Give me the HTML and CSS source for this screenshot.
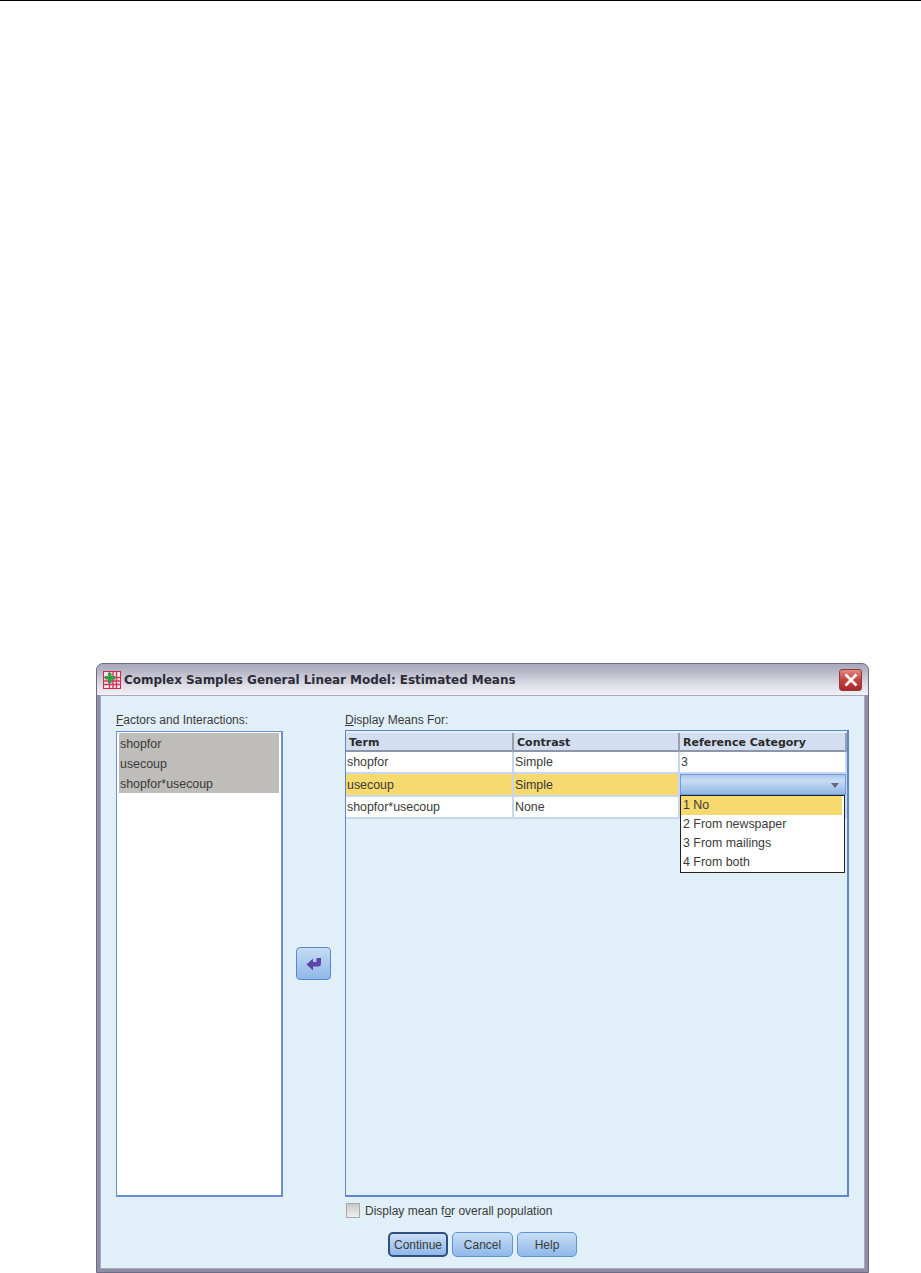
FILE: index.html

```html
<!DOCTYPE html>
<html lang="en">
<head>
    <meta charset="UTF-8">
    <meta name="viewport" content="width=device-width, initial-scale=1.0">
    <title>Estimated Means</title>
    <link rel="stylesheet" href="styles.css">
</head>
<body>
    <div class="page-rule"></div>
    <div class="dialog">
        <div class="titlebar">
            <svg class="app-icon" width="18" height="18" viewBox="0 0 18 18">
                <rect x="0.500" y="0.500" width="17" height="17" fill="#f7e4ea" stroke="#c42a52"/>
                <path d="M1 6.500h16M1 10h16M1 13.500h16M6.500 1v16M10 1v16M13.500 1v16" stroke="#d0385f" stroke-width="1.400"/>
                <path d="M5 2h3.500v3H12v3.500H8.500V12H5V8.500H2V5h3z" fill="#2f9e3f"/>
            </svg>
            <span class="title-text">Complex Samples General Linear Model: Estimated Means</span>
            <div class="close-btn">
                <svg width="16" height="14" viewBox="0 0 16 14">
                    <path d="M2.500 1.500l11 11M13.500 1.500l-11 11" stroke="#fff" stroke-width="2.600"/>
                </svg>
            </div>
        </div>
        <div class="dialog-body">
            <div class="columns">
                <div class="left-col">
                    <div class="field-label"><u>F</u>actors and Interactions:</div>
                    <div class="list-box">
                        <div class="list-item">shopfor</div>
                        <div class="list-item">usecoup</div>
                        <div class="list-item">shopfor*usecoup</div>
                    </div>
                </div>
                <div class="mid-col">
                    <div class="move-btn">
                        <svg width="16" height="14" viewBox="0 0 16 14">
                            <path d="M0.500 7.500L7 1.500V5H10.500V1H15V6.500Q15 9.500 12 9.500H7V13.500z" fill="#5b46a6"/>
                        </svg>
                    </div>
                </div>
                <div class="right-col">
                    <div class="field-label"><u>D</u>isplay Means For:</div>
                    <div class="table-box">
                        <div class="grid-row grid-head">
                            <div class="cell">Term</div>
                            <div class="cell">Contrast</div>
                            <div class="cell">Reference Category</div>
                        </div>
                        <div class="grid-row">
                            <div class="cell">shopfor</div>
                            <div class="cell">Simple</div>
                            <div class="cell">3</div>
                        </div>
                        <div class="grid-row grid-selected">
                            <div class="cell">usecoup</div>
                            <div class="cell">Simple</div>
                            <div class="cell combo-cell">
                                <div class="combo"><span class="combo-arrow"></span></div>
                                <ul class="combo-menu">
                                    <li class="combo-active">1 No</li>
                                    <li>2 From newspaper</li>
                                    <li>3 From mailings</li>
                                    <li>4 From both</li>
                                </ul>
                            </div>
                        </div>
                        <div class="grid-row">
                            <div class="cell">shopfor*usecoup</div>
                            <div class="cell">None</div>
                            <div class="cell"></div>
                        </div>
                    </div>
                    <label class="check-row">
                        <span class="check-box"></span>
                        <span>Display mean f<u>o</u>r overall population</span>
                    </label>
                </div>
            </div>
            <div class="buttons">
                <div class="btn btn-default">Continue</div>
                <div class="btn btn-cancel">Cancel</div>
                <div class="btn">Help</div>
            </div>
        </div>
    </div>
</body>
</html>
```

FILE: styles.css

```css
* {
    margin: 0;
    padding: 0;
    box-sizing: border-box;
}
body {
    background-color: #fff;
    font-family: "Liberation Sans", Arial, sans-serif;
    font-size: 12px;
    color: #3a3a3a;
}
.page-rule {
    height: 1px;
    background-color: #000;
}
.dialog {
    width: 773px;
    height: 610px;
    margin: 662px 0 0 96px;
    background-color: #8f8ea6;
    border: 1px solid #6d6b85;
    border-radius: 7px 7px 0 0;
    padding: 0 3px 3px 3px;
    display: flex;
    flex-direction: column;
}
.titlebar {
    height: 31px;
    margin: 0 -3px;
    padding: 0 6px 0 6px;
    border-radius: 6px 6px 0 0;
    background: linear-gradient(#a9a7ba 0, #b9b8c8 25%, #dcdce4 65%, #f1f1f4 100%);
    display: flex;
    align-items: center;
}
.app-icon {
    margin-right: 3px;
}
.title-text {
    flex: 1;
    font-family: "DejaVu Sans", sans-serif;
    font-size: 12px;
    font-weight: bold;
    color: #2c2c38;
    letter-spacing: -0.04px;
}
.close-btn {
    width: 23px;
    height: 22px;
    border: 1px solid #8c3a3e;
    border-radius: 3px;
    background: linear-gradient(#e08a80, #c8403e 50%, #a8282c);
    display: flex;
    align-items: center;
    justify-content: center;
}
.dialog-body {
    flex: 1;
    background-color: #e1eff9;
    border: 1px solid #a9a8b8;
    padding: 18px 14px 0 15px;
    display: flex;
    flex-direction: column;
}
.columns {
    display: flex;
}
.left-col {
    width: 167px;
}
.field-label {
    height: 17px;
    line-height: 13px;
}
.list-box {
    height: 466px;
    background-color: #fff;
    border: 1px solid #6a8ecf;
    border-right-width: 2px;
    border-bottom-width: 2px;
    padding: 1px 2px 0 2px;
}
.list-item {
    height: 20px;
    line-height: 22px;
    width: 160px;
    padding-left: 1px;
    font-size: 12.400px;
    background-color: #bfbdba;
}
.mid-col {
    width: 62px;
    padding: 233px 0 0 13px;
}
.move-btn {
    width: 35px;
    height: 33px;
    border: 1px solid #5a88cc;
    border-radius: 4px;
    background: linear-gradient(#c4dcf4, #8fb8e8);
    display: flex;
    align-items: center;
    justify-content: center;
}
.right-col {
    width: 504px;
}
.right-col .field-label {
    height: 16px;
}
.table-box {
    height: 467px;
    border: 1px solid #5f86cc;
    border-right-width: 2px;
    border-bottom-width: 2px;
    padding-top: 2px;
}
.grid-row {
    display: grid;
    grid-template-columns: 168px 166px 167px;
    height: 22px;
    background-color: #fff;
    border-bottom: 2px solid #c5d8ef;
}
.grid-row:nth-child(3) {
    height: 23px;
}
.cell {
    line-height: 20px;
    padding-left: 1px;
    font-size: 12.400px;
    border-right: 2px solid #c5d8ef;
}
.grid-selected .cell {
    line-height: 22px;
}
.grid-head {
    height: 19px;
    background-color: #d3dff1;
    border-bottom: 2px solid #8d96a8;
    font-weight: bold;
    color: #2a2a2a;
}
.grid-head .cell {
    padding-left: 3px;
    line-height: 19px;
    border-right: 2px solid #98a0b0;
    font-family: "DejaVu Sans", sans-serif;
    font-size: 11px;
}
.grid-selected {
    background-color: #f6d96f;
}
.combo-cell {
    position: relative;
    background-color: #fff;
    padding-left: 0;
}
.combo {
    height: 21px;
    margin-right: -1px;
    border: 1px solid #6f9bd8;
    background: linear-gradient(#a9c7ea, #c9ddf3 30%, #8fb6e6);
    position: relative;
}
.combo-arrow {
    position: absolute;
    right: 6px;
    top: 8px;
    border-left: 4px solid transparent;
    border-right: 4px solid transparent;
    border-top: 5px solid #5f6b7c;
}
.combo-menu {
    position: absolute;
    left: 0;
    top: 21px;
    width: 165px;
    height: 78px;
    list-style: none;
    background-color: #fff;
    border: 1px solid #222;
}
.combo-menu li {
    height: 19px;
    line-height: 19px;
    padding-left: 2px;
}
.combo-menu .combo-active {
    background-color: #f6d96f;
    margin-right: 2px;
}
.check-row {
    display: flex;
    align-items: center;
    gap: 5px;
    margin-top: 6px;
    height: 15px;
    padding-left: 1px;
}
.check-box {
    width: 14px;
    height: 15px;
    border: 1px solid #a9a9a9;
    background: linear-gradient(#c8c8c8, #eee);
}
.buttons {
    display: flex;
    gap: 4px;
    margin: 14px 0 0 272px;
}
.btn {
    width: 60px;
    height: 25px;
    line-height: 24px;
    text-align: center;
    border: 1px solid #5f92d6;
    border-radius: 5px;
    background: linear-gradient(#c8def5, #8fb8ea);
}
.btn-cancel {
    width: 61px;
}
.btn-default {
    border: 2px solid #2f4f7f;
    line-height: 22px;
}
```
